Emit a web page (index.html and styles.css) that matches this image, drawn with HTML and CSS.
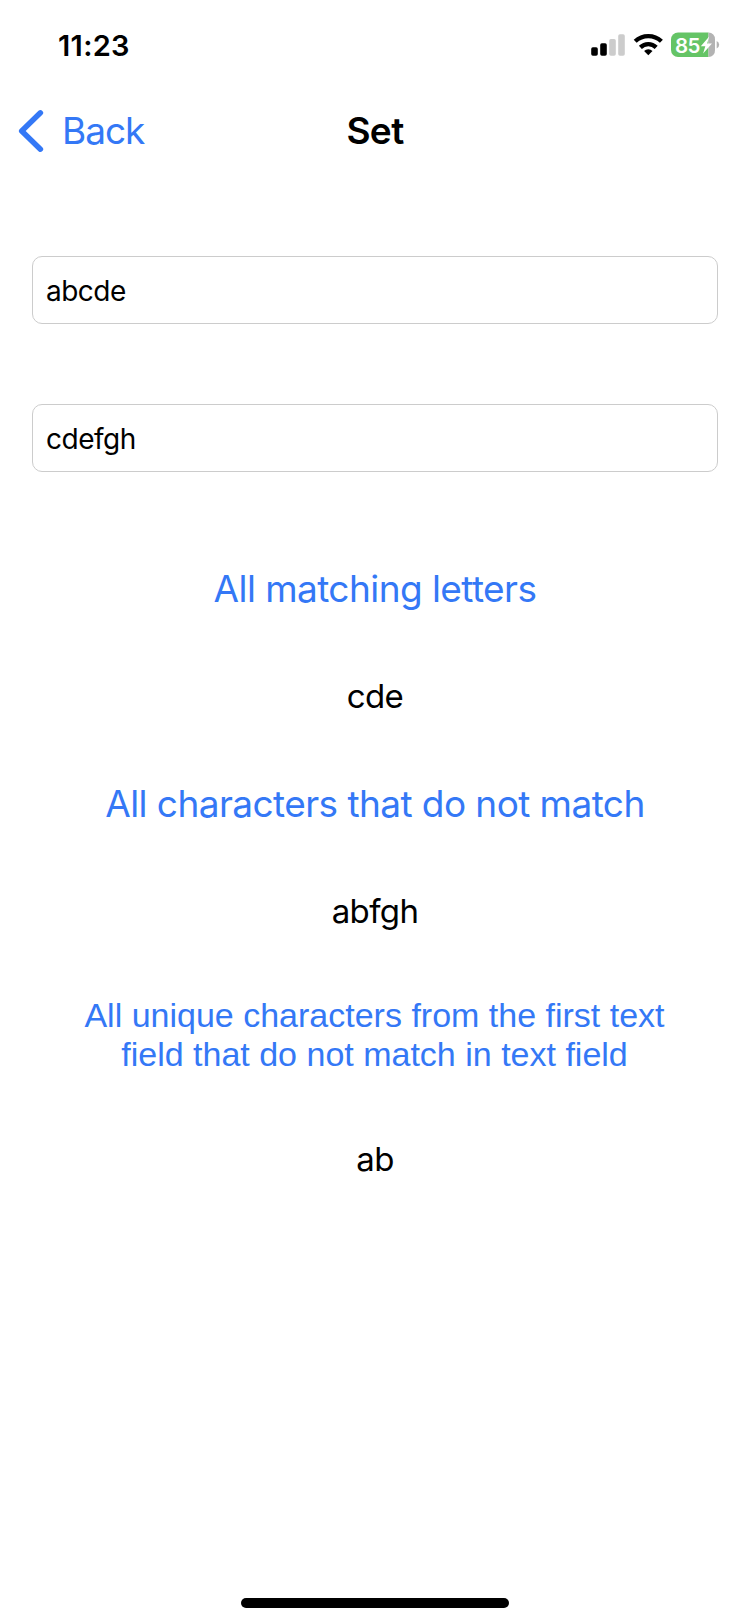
FILE: index.html
```html
<!DOCTYPE html>
<html lang="en">
<head>
<meta charset="utf-8">
<title>Set</title>
<link rel="stylesheet" href="styles.css">
</head>
<body>
<div class="screen">
  <header class="status">
    <span class="time">11:23</span>
    <svg class="indicators" width="130" height="27" viewBox="0 0 130 27">
      <rect x="1.2" y="16.2" width="6.6" height="8.6" rx="1.7"/>
      <rect x="10.2" y="12.2" width="6.6" height="12.6" rx="1.7"/>
      <rect class="dim" x="19.2" y="8" width="6.6" height="16.8" rx="1.7"/>
      <rect class="dim" x="28.2" y="3.2" width="6.6" height="21.6" rx="1.7"/>
      <g class="wave">
        <path d="M45.2 10.3a19 19 0 0 1 26.2 0"/>
        <path d="M50.4 16.4a11.4 11.4 0 0 1 15.8 0"/>
      </g>
      <path d="M58.3 24.3l-4.2-4.2a5.9 5.9 0 0 1 8.4 0z"/>
      <path class="charge" d="M118.5 1.500v24.500H88a7 7 0 0 1-7-7V8.500a7 7 0 0 1 7-7z"/>
      <path class="rest" d="M118.5 1.500a6.500 6.500 0 0 1 6.500 7v10.500a6.500 6.500 0 0 1-6.500 7z"/>
      <path class="rest" d="M126.7 10a4 4 0 0 1 0 7.4z"/>
      <text class="percent" x="85" y="21.5">85</text>
      <path class="bolt" d="M119.2 5.6l-8.400 9.600h4.500l-2.200 7.200 8.900-9.800h-4.800z"/>
    </svg>
  </header>
  <nav class="nav">
    <a class="back"><svg width="26" height="44" viewBox="0 0 26 44"><path d="M22.4 3.800 3.700 22l18.700 18.200"/></svg><span>Back</span></a>
    <h1 class="title">Set</h1>
  </nav>
  <main class="content">
    <div class="field">abcde</div>
    <div class="field">cdefgh</div>
    <a class="action">All matching letters</a>
    <p class="result">cde</p>
    <a class="action">All characters that do not match</a>
    <p class="result">abfgh</p>
    <a class="action small">All unique characters from the first text<br>field that do not match in text field</a>
    <p class="result">ab</p>
  </main>
  <div class="home"></div>
</div>
</body>
</html>
```
FILE: styles.css
```css
* { box-sizing: border-box; }
body { margin: 0; background: #fff; color: #000; font-family: Inter, "Liberation Sans", sans-serif; }
.screen { display: flex; flex-direction: column; width: 750px; height: 1624px; overflow: hidden; }
.status { display: flex; justify-content: space-between; align-items: center; height: 89px; padding: 0 30px 0 58px; }
.time { padding-top: 1px; font-size: 29px; font-weight: 600; letter-spacing: 0.3px; }
.wave { fill: none; stroke: #000; stroke-width: 4.3; }
.dim { fill: #ccc; }
.charge { fill: #65c466; }
.rest { fill: #b3b3b3; }
.bolt { fill: #fff; }
.percent { fill: #fff; font-size: 20.5px; font-weight: 600; letter-spacing: -0.6px; }
.nav { display: grid; grid-template-columns: 1fr auto 1fr; align-items: center; height: 84px; padding: 0 18px; }
.back { display: flex; align-items: center; gap: 18px; color: #3478f6; font-size: 37px; letter-spacing: -1px; }
.back span { padding-bottom: 2px; }
.back path { fill: none; stroke: #3478f6; stroke-width: 5.5; stroke-linecap: round; stroke-linejoin: round; }
.title { margin: 0; padding-bottom: 2px; font-size: 37px; font-weight: 600; letter-spacing: -0.6px; }
.content { display: flex; flex-direction: column; flex: 1; padding: 83px 32px 0; text-align: center; }
.field { height: 68px; margin-bottom: 80px; padding-left: 13px; border: 1px solid #ccc; border-radius: 10px; font-size: 28px; line-height: 68px; letter-spacing: -0.5px; text-align: left; }
.action { height: 75px; color: #3478f6; font-size: 37px; line-height: 73px; letter-spacing: -0.57px; }
.result { height: 40px; margin: 50px 0; font-size: 33px; line-height: 38px; letter-spacing: -0.6px; }
.small { height: 78px; margin: 14px 0 16px; padding-right: 1px; font-family: "Liberation Sans", Arial, sans-serif; font-size: 34px; line-height: 39px; letter-spacing: 0; }
.home { align-self: center; width: 268px; height: 10px; margin-bottom: 16px; border-radius: 5px; background: #000; }
```
